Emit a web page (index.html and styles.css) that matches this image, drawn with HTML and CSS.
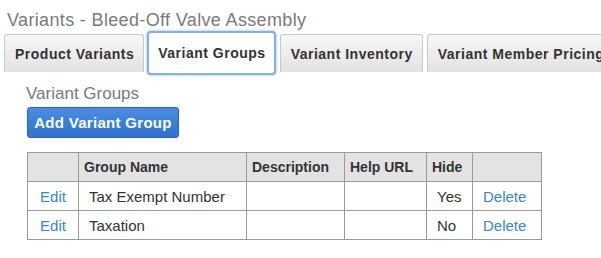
FILE: index.html
```html
<!DOCTYPE html>
<html>
<head>
<meta charset="utf-8">
<link rel="stylesheet" href="styles.css">
</head>
<body>
<div class="page">
  <h1 class="title">Variants - Bleed-Off Valve Assembly</h1>
  <div class="tabs">
    <div class="tab">Product Variants</div>
    <div class="tab active">Variant Groups</div>
    <div class="tab">Variant Inventory</div>
    <div class="tab">Variant Member Pricing</div>
  </div>
  <div class="panel">
    <h2 class="subtitle">Variant Groups</h2>
    <button class="btn">Add Variant Group</button>
    <table class="grid">
      <colgroup>
        <col class="c-edit"><col class="c-name"><col class="c-desc"><col class="c-url"><col class="c-hide"><col class="c-del">
      </colgroup>
      <thead>
        <tr><th></th><th>Group Name</th><th>Description</th><th>Help URL</th><th>Hide</th><th></th></tr>
      </thead>
      <tbody>
        <tr><td class="center"><a class="link">Edit</a></td><td>Tax Exempt Number</td><td></td><td></td><td>Yes</td><td><a class="link">Delete</a></td></tr>
        <tr><td class="center"><a class="link">Edit</a></td><td>Taxation</td><td></td><td></td><td>No</td><td><a class="link">Delete</a></td></tr>
      </tbody>
    </table>
  </div>
</div>
</body>
</html>
```
FILE: styles.css
```css
html, body { margin: 0; padding: 0; background: #fff; }
body { font-family: "Liberation Sans", Arial, sans-serif; color: #333; }
.page { width: 601px; height: 258px; overflow: hidden; }
.title { margin: 0; padding: 9px 0 0 7px; font-size: 18px; letter-spacing: 0.35px; font-weight: normal; color: #7a7a7a; line-height: 22px; white-space: nowrap; }
.tabs { display: flex; gap: 4px; padding: 0 0 0 4px; align-items: flex-end; white-space: nowrap; }
.tab { flex: none; height: 38px; box-sizing: border-box; padding: 0 9px 0 10px; line-height: 38px; font-size: 14px; letter-spacing: 0.5px; font-weight: bold; color: #333; border: 1px solid #c8c8c8; border-bottom: none; border-radius: 3px 3px 0 0; background: linear-gradient(#f7f7f7, #e2e2e2); }
.tab.active { height: 44px; line-height: 40px; padding: 0 8px 0 9px; margin-left: -1px; background: #fff; border: 2px solid #86b0e0; border-radius: 4px; box-shadow: 0 0 3px rgba(70,130,210,0.6); margin-bottom: -3px; }
.panel { padding: 12px 0 0 27px; }
.subtitle { margin: 0 0 0 -1px; font-size: 17px; font-weight: normal; color: #7a7a7a; line-height: 20px; }
.btn { display: block; margin-top: 3px; height: 31px; width: 152px; padding: 0; font-family: inherit; font-size: 15px; letter-spacing: 0.3px; font-weight: bold; color: #fff; border: 1px solid #2c65b8; border-radius: 3px; background: linear-gradient(#4a8de0, #2f72d0); }
.grid { margin-top: 14px; border-collapse: collapse; table-layout: fixed; width: 514px; font-size: 15px; }
.c-edit { width: 51px; } .c-name { width: 168px; } .c-desc { width: 98px; } .c-url { width: 82px; } .c-hide { width: 46px; } .c-del { width: 69px; }
.grid th, .grid td { border: 1px solid #9a9a9a; height: 28px; padding: 0 10px; text-align: left; white-space: nowrap; }
.grid th { background: #e3e3e3; font-weight: bold; padding: 0 5px; font-size: 14px; }
.grid td.center { text-align: center; padding: 0; }
.link { color: #3a86c6; }
```
